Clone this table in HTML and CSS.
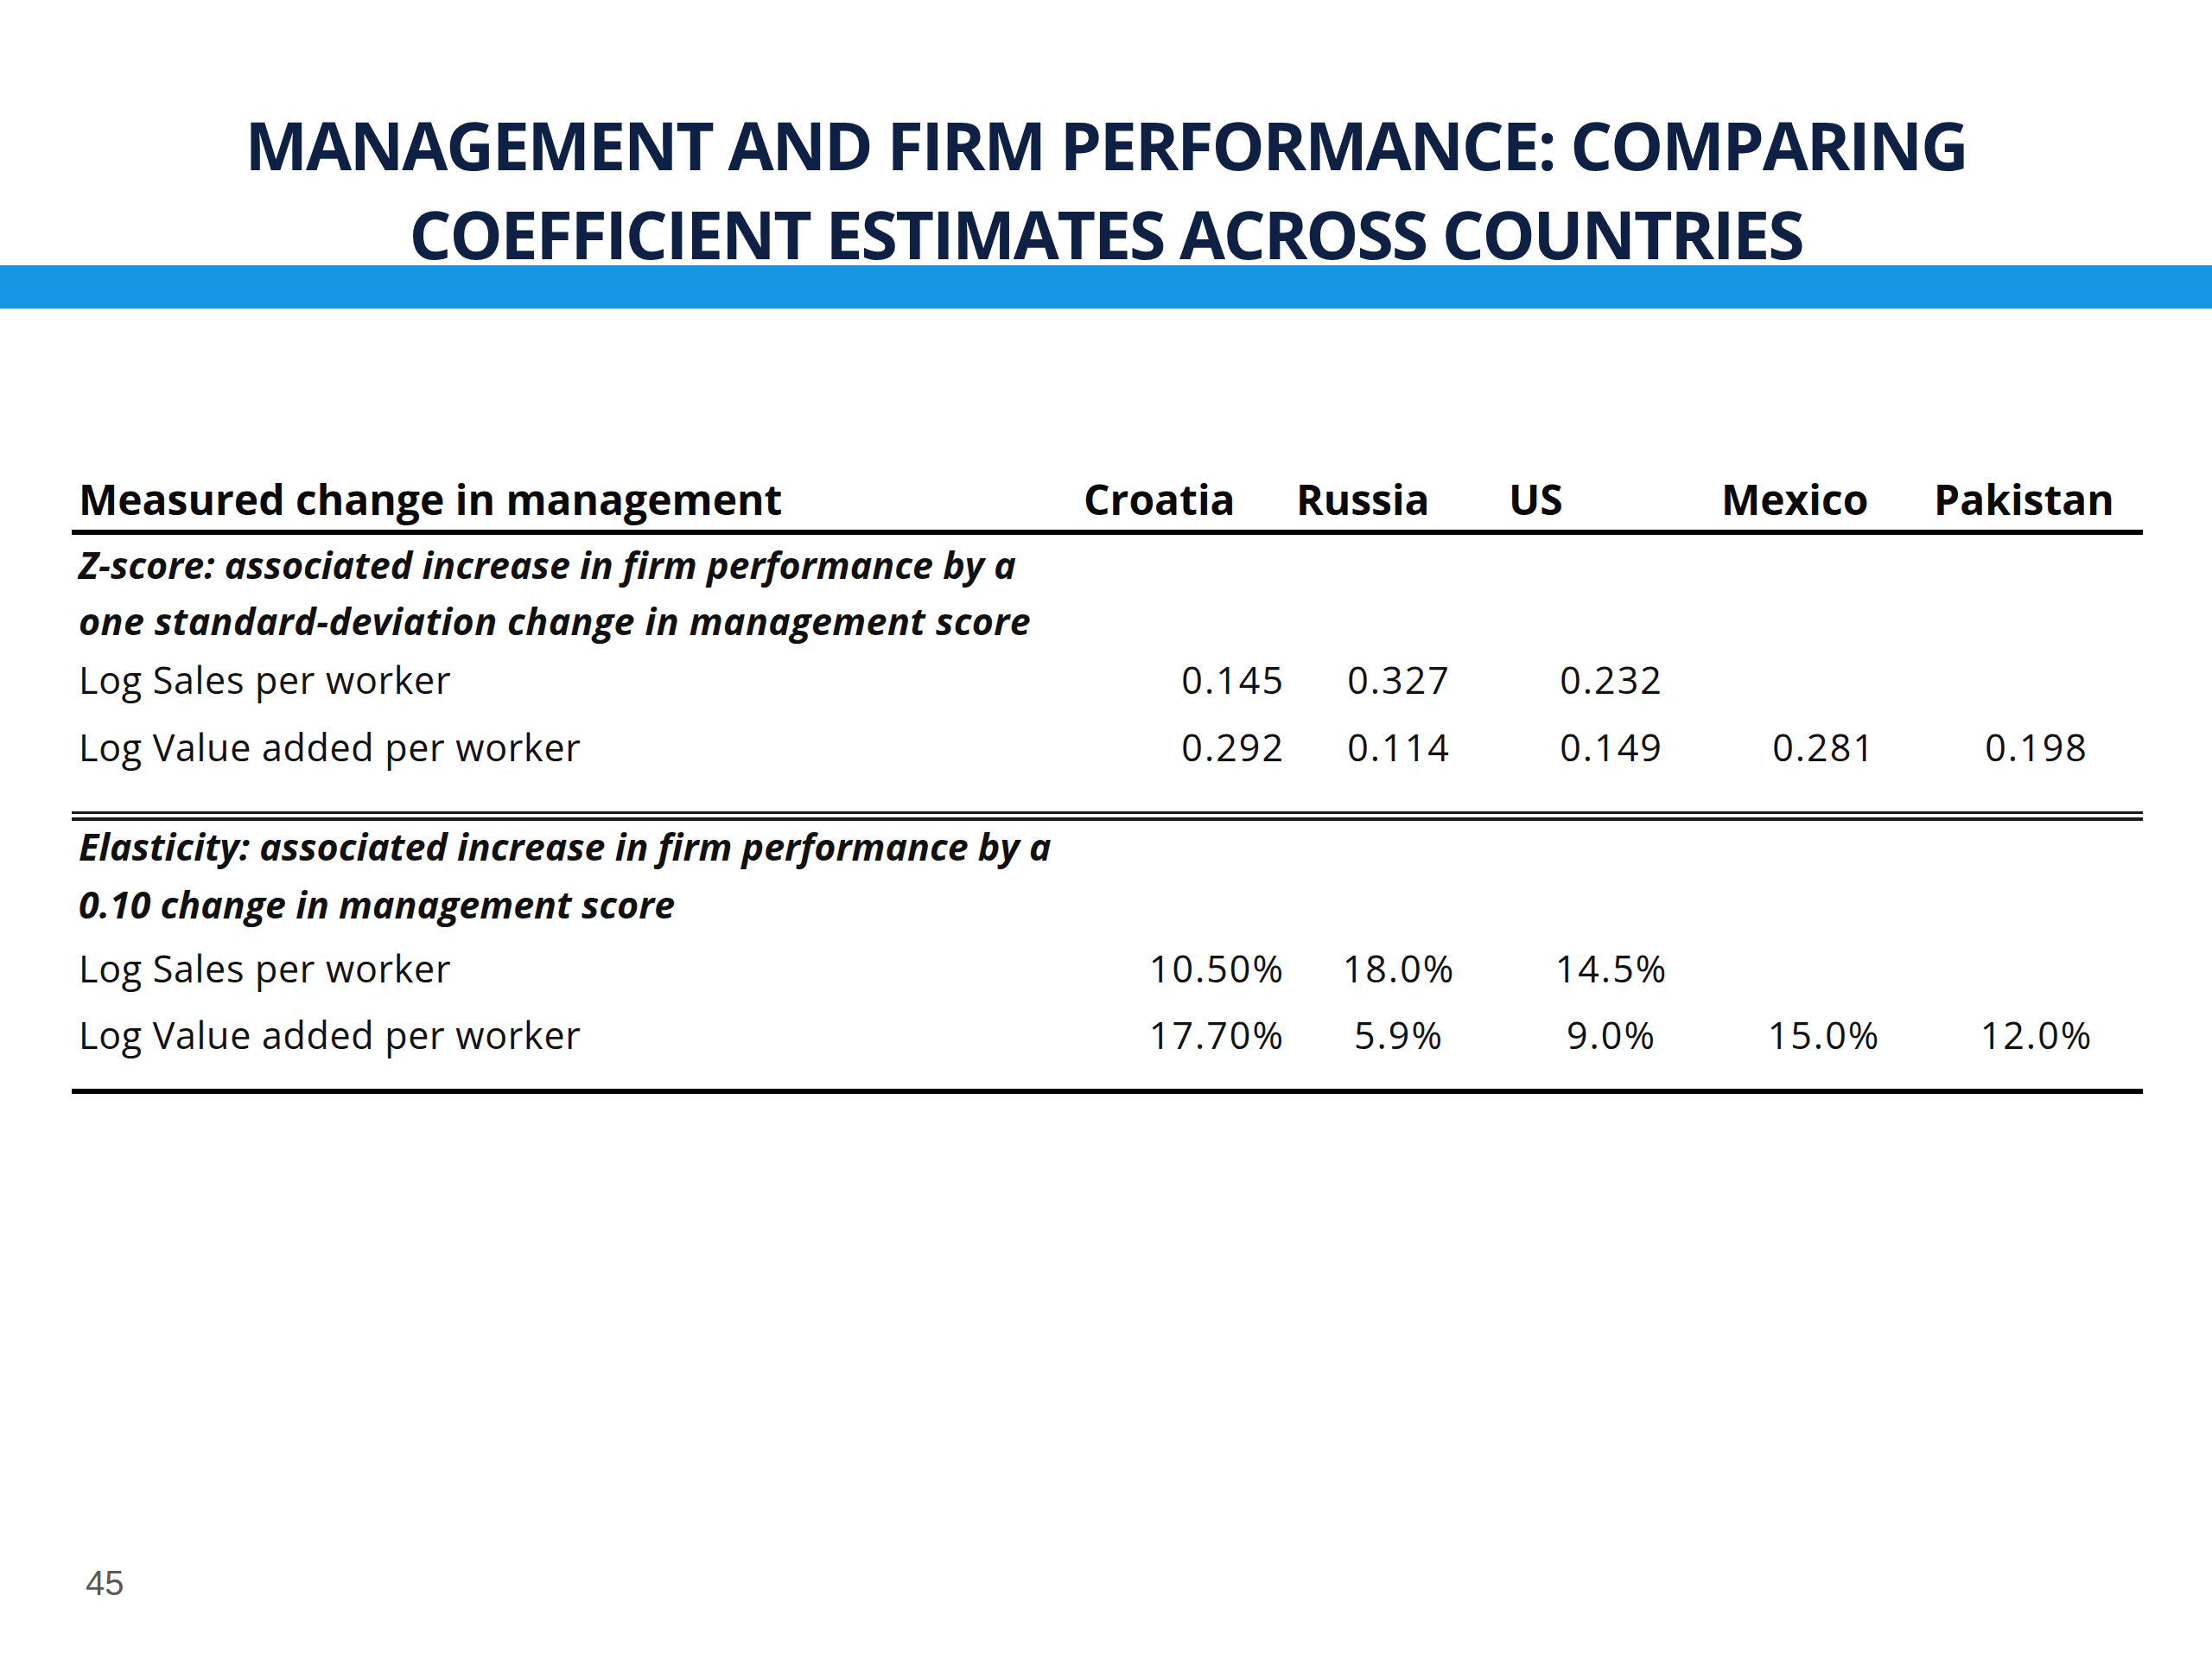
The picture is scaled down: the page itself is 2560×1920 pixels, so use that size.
FILE: index.html
```html
<!DOCTYPE html>
<html lang="en">
<head>
<meta charset="utf-8">
<title>Management and firm performance</title>
<link rel="stylesheet" href="styles.css">
</head>
<body>
<div class="slide">
  <header class="title-area">
    <h1 class="title">MANAGEMENT AND FIRM PERFORMANCE: COMPARING<br>COEFFICIENT ESTIMATES ACROSS COUNTRIES</h1>
  </header>
  <div class="accent-bar"></div>

  <main class="content">
    <div class="table">
      <div class="row head">
        <div class="label">Measured change in management</div>
        <div class="hd">Croatia</div>
        <div class="hd">Russia</div>
        <div class="hd">US</div>
        <div class="hd">Mexico</div>
        <div class="hd">Pakistan</div>
      </div>

      <div class="section zscore">
        <div class="sub sub-first">Z-score: associated increase in firm performance by a</div>
        <div class="sub sub-last">one standard-deviation change in management score</div>
        <div class="row data data-first">
          <div class="label">Log Sales per worker</div>
          <div class="val first">0.145</div>
          <div class="val">0.327</div>
          <div class="val">0.232</div>
          <div class="val"></div>
          <div class="val"></div>
        </div>
        <div class="row data">
          <div class="label">Log Value added per worker</div>
          <div class="val first">0.292</div>
          <div class="val">0.114</div>
          <div class="val">0.149</div>
          <div class="val">0.281</div>
          <div class="val">0.198</div>
        </div>
      </div>

      <div class="double-rule"></div>

      <div class="section elasticity">
        <div class="sub sub-first">Elasticity: associated increase in firm performance by a</div>
        <div class="sub sub-last">0.10 change in management score</div>
        <div class="row data data-first">
          <div class="label">Log Sales per worker</div>
          <div class="val first">10.50%</div>
          <div class="val">18.0%</div>
          <div class="val">14.5%</div>
          <div class="val"></div>
          <div class="val"></div>
        </div>
        <div class="row data">
          <div class="label">Log Value added per worker</div>
          <div class="val first">17.70%</div>
          <div class="val">5.9%</div>
          <div class="val">9.0%</div>
          <div class="val">15.0%</div>
          <div class="val">12.0%</div>
        </div>
      </div>

      <div class="bottom-rule"></div>
    </div>
  </main>

  <footer class="page-number">45</footer>
</div>
</body>
</html>
```

FILE: styles.css
```css
html, body {
  margin: 0;
  padding: 0;
  background: #ffffff;
}

.slide {
  width: 2560px;
  min-height: 1920px;
  display: flex;
  flex-direction: column;
  background: #ffffff;
  font-family: "Open Sans", "Liberation Sans", sans-serif;
  color: #111111;
}

.title-area {
  padding-top: 116px;
  margin-bottom: -15px;
  position: relative;
  z-index: 1;
}

.title {
  margin: 0;
  text-align: center;
  font-family: "Open Sans", "Liberation Sans", sans-serif;
  font-weight: 700;
  font-size: 77px;
  line-height: 103px;
  letter-spacing: -2.2px;
  color: #0e2145;
}

.accent-bar {
  height: 50px;
  background: #1796e5;
}

.content {
  padding: 191px 80px 0 83px;
}

.table {
  width: 2397px;
}

.row {
  display: grid;
  grid-template-columns: 1167px repeat(5, 246px);
  align-items: baseline;
}

.label {
  padding-left: 8px;
  white-space: nowrap;
}

.head {
  font-weight: 700;
  font-size: 48px;
  line-height: 60px;
  padding-bottom: 5px;
  border-bottom: 6px solid #000000;
  color: #0a0a0a;
}

.hd {
  padding-left: 4px;
  white-space: nowrap;
}

.section {
  display: flex;
  flex-direction: column;
}

.zscore {
  padding-top: 5px;
}

.sub {
  padding-left: 8px;
  font-weight: 700;
  font-style: italic;
  font-size: 43px;
  line-height: 60px;
  white-space: nowrap;
}

.zscore .sub-last {
  letter-spacing: 0.4px;
}

.sub-first {
  height: 65px;
}

.sub-last {
  height: 68px;
}

.data {
  font-size: 43px;
  line-height: 60px;
  height: 60px;
  letter-spacing: 0.7px;
}

.data-first {
  height: 78px;
}

.elasticity .sub-first {
  height: 67px;
}

.elasticity .sub-last {
  height: 74px;
}

.elasticity .data-first {
  height: 77px;
}

.val {
  text-align: center;
  white-space: nowrap;
  letter-spacing: 2px;
}

.val.first {
  text-align: right;
  padding-right: 9px;
}

.double-rule {
  margin-top: 44px;
  height: 4px;
  border-top: 3px solid #1a1a1a;
  border-bottom: 4px solid #1a1a1a;
}

.bottom-rule {
  margin-top: 32px;
  height: 6px;
  background: #000000;
}

.page-number {
  margin-top: auto;
  padding: 0 0 65px 99px;
  font-family: "Liberation Sans", Arial, sans-serif;
  font-size: 40px;
  line-height: 45px;
  color: #595959;
}
```
